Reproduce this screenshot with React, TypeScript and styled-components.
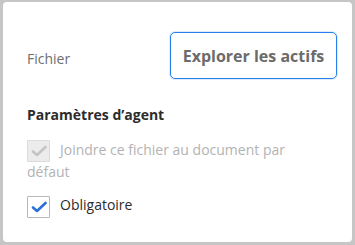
import React from "react";
import styled, { createGlobalStyle } from "styled-components";

const Global = createGlobalStyle`
  html, body { margin: 0; padding: 0; background: #c6c6c6; }
  body { width: 355px; height: 245px; overflow: hidden; font-family: "Open Sans", "Noto Sans", sans-serif; }
`;

const Frame = styled.div`
  box-sizing: border-box;
  width: 355px;
  height: 245px;
  padding: 2px 3px 3px 3px;
`;

const Card = styled.div`
  box-sizing: border-box;
  height: 100%;
  background: #fff;
  border-radius: 4px;
  padding: 30px 15px 0 24px;
`;

const FileRow = styled.div`
  display: grid;
  grid-template-columns: 143px 167px;
  align-items: center;
`;

const Label = styled.span`
  padding-top: 6px;
  font-size: 14px;
  color: #6e6e6e;
`;

const BrowseButton = styled.button`
  box-sizing: border-box;
  width: 167px;
  height: 47px;
  border: 1px solid #2680eb;
  border-radius: 5px;
  background: #fff;
  font-family: inherit;
  font-weight: 700;
  font-size: 16px;
  color: #6b6b6b;
  padding: 0;
  box-shadow: 0 0 0 1px rgba(38, 128, 235, 0.15);
`;

const SectionTitle = styled.div`
  margin-top: 26px;
  font-size: 14px;
  font-weight: 700;
  color: #2c2c2c;
`;

const CheckRow = styled.div<{ $disabled?: boolean }>`
  margin-top: ${(p) => (p.$disabled ? "16px" : "14px")};
  font-size: 14px;
  line-height: 19px;
  color: ${(p) => (p.$disabled ? "#b3b3b3" : "#2c2c2c")};
  width: 270px;
`;

const Box = styled.span<{ $disabled?: boolean }>`
  box-sizing: border-box;
  display: inline-flex;
  align-items: center;
  justify-content: center;
  vertical-align: middle;
  width: 23px;
  height: 22px;
  margin-right: 10px;
  border: 1px solid ${(p) => (p.$disabled ? "#dcdcdc" : "#b8b8b8")};
  background: ${(p) => (p.$disabled ? "#ececec" : "#fff")};
  border-radius: 1px;
`;

const Check = ({ color }: { color: string }) => (
  <svg width="16" height="12" viewBox="0 0 16 12">
    <path d="M2 6.5 L6 10 L14.5 2" fill="none" stroke={color} strokeWidth="2.6" strokeLinecap="round" strokeLinejoin="round" />
  </svg>
);

export default function App() {
  return (
    <>
      <Global />
      <Frame>
        <Card>
          <FileRow>
            <Label>Fichier</Label>
            <BrowseButton>Explorer les actifs</BrowseButton>
          </FileRow>
          <SectionTitle>Paramètres d’agent</SectionTitle>
          <CheckRow $disabled>
            <Box $disabled>
              <Check color="#c4c4c4" />
            </Box>
            Joindre ce fichier au document par défaut
          </CheckRow>
          <CheckRow>
            <Box>
              <Check color="#2d6fd8" />
            </Box>
            Obligatoire
          </CheckRow>
        </Card>
      </Frame>
    </>
  );
}
